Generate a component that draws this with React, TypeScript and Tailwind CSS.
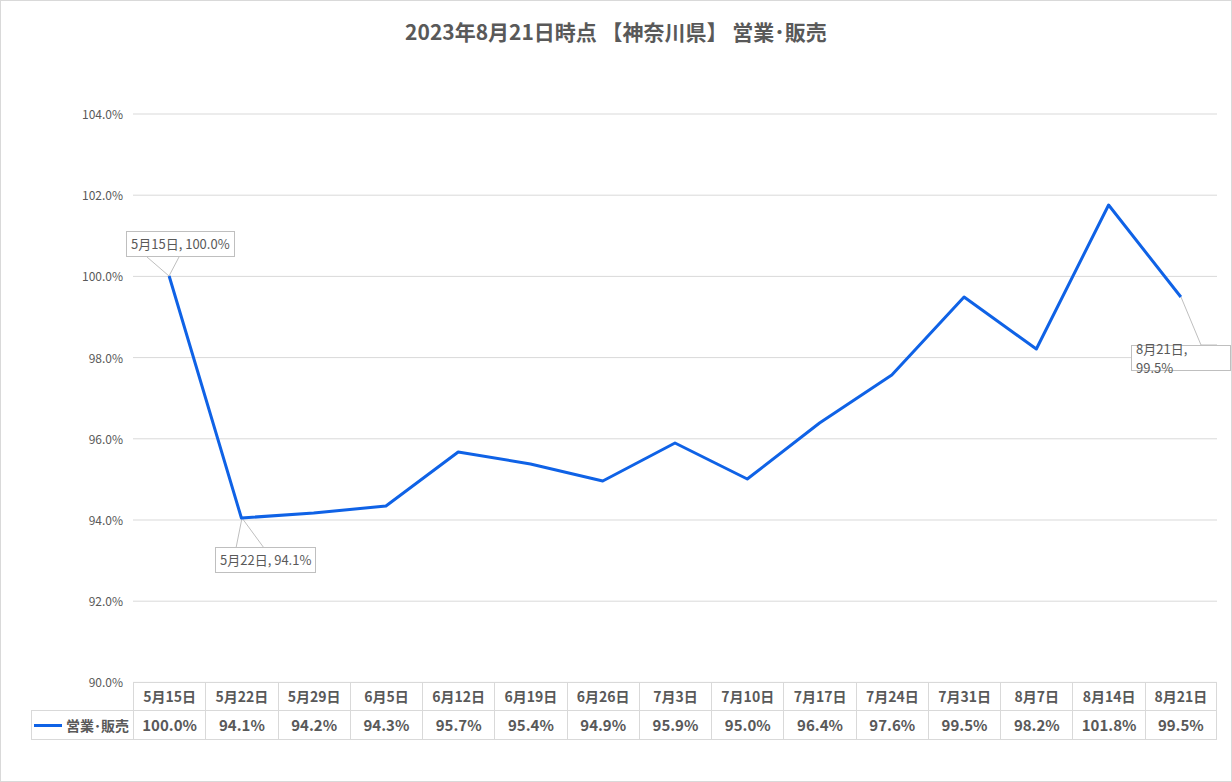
import React from 'react';

const dates = ['5月15日', '5月22日', '5月29日', '6月5日', '6月12日', '6月19日', '6月26日', '7月3日', '7月10日', '7月17日', '7月24日', '7月31日', '8月7日', '8月14日', '8月21日'];
const values = ['100.0%', '94.1%', '94.2%', '94.3%', '95.7%', '95.4%', '94.9%', '95.9%', '95.0%', '96.4%', '97.6%', '99.5%', '98.2%', '101.8%', '99.5%'];
// pixel y of each point, read from the chart
const ys = [275, 517, 512, 505, 451, 463, 480, 442, 478, 422, 374, 296, 348, 204, 296];
const ticks = ['104.0%', '102.0%', '100.0%', '98.0%', '96.0%', '94.0%', '92.0%', '90.0%'];

const colW = (1216 - 132) / 15;
const xs = ys.map((_, i) => 132 + colW * (i + 0.5));
const font = { fontFamily: '"Noto Sans CJK JP", "Noto Sans", sans-serif' };

export default function App() {
  const pts = xs.map((x, i) => `${x},${ys[i]}`).join(' ');
  return (
    <div className="relative w-[1232px] h-[782px] bg-white border border-[#d9d9d9] text-[#595959]" style={font}>
      <div className="absolute left-0 right-0 top-[15px] text-center text-[21px] font-bold">
        2023年8月21日時点 【神奈川県】 営業･販売
      </div>

      <svg className="absolute left-0 top-0" width="1232" height="782">
        {ticks.map((t, i) => (
          <line key={t} x1="132" x2="1216" y1={113 + i * 81.2} y2={113 + i * 81.2} stroke="#d9d9d9" strokeWidth="1" />
        ))}
        <polyline points="168,275 146,256" fill="none" stroke="#bfbfbf" />
        <polyline points="168,275 178,256" fill="none" stroke="#bfbfbf" />
        <polyline points="241,517 235,547" fill="none" stroke="#bfbfbf" />
        <polyline points="241,517 263,547" fill="none" stroke="#bfbfbf" />
        <polyline points="1180,296 1200,344 1216,344" fill="none" stroke="#bfbfbf" />
        <polyline points={pts} fill="none" stroke="#0f62e6" strokeWidth="3" strokeLinejoin="round" />
      </svg>

      {ticks.map((t, i) => (
        <div key={t} className="absolute left-[60px] w-[62px] text-right text-[12px]" style={{ top: 113 + i * 81.2 - 9 }}>
          {t}
        </div>
      ))}

      <div className="absolute left-[125px] top-[230px] px-1 h-[26px] flex items-center bg-white border border-[#bfbfbf] text-[13px]">5月15日, 100.0%</div>
      <div className="absolute left-[214px] top-[546px] px-1 h-[26px] flex items-center bg-white border border-[#bfbfbf] text-[13px]">5月22日, 94.1%</div>
      <div className="absolute left-[1130px] top-[344px] px-1 h-[26px] flex items-center bg-white border border-[#bfbfbf] text-[13px]">8月21日, 99.5%</div>

      <div className="absolute left-[30px] top-[681px] flex flex-col text-[14px] font-bold">
        <div className="flex">
          <div className="w-[102px]" />
          {dates.map((d) => (
            <div key={d} className="h-[28px] flex items-center justify-center border-l border-t border-[#d9d9d9] last:border-r" style={{ width: colW }}>
              {d}
            </div>
          ))}
        </div>
        <div className="flex border-b border-[#d9d9d9]">
          <div className="w-[102px] h-[29px] flex items-center justify-end gap-1 pr-1 border-l border-t border-[#d9d9d9]">
            <div className="w-[28px] h-[3px] bg-[#0f62e6]" />
            <span className="text-[14px]">営業･販売</span>
          </div>
          {values.map((v, i) => (
            <div key={i} className="h-[29px] flex items-center justify-center border-l border-t border-[#d9d9d9] last:border-r text-[15px]" style={{ width: colW }}>
              {v}
            </div>
          ))}
        </div>
      </div>
    </div>
  );
}
